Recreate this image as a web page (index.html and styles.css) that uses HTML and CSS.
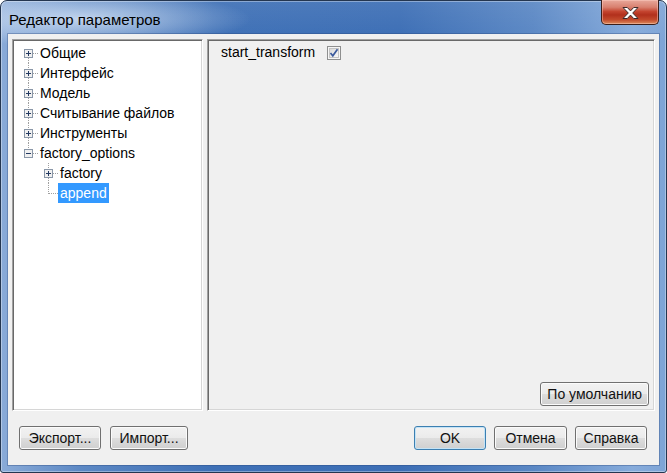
FILE: index.html
```html
<!DOCTYPE html>
<html lang="ru">
<head>
<meta charset="utf-8">
<title>Редактор параметров</title>
<link rel="stylesheet" href="styles.css">
</head>
<body>
<div class="window">
  <div class="titlebar">
    <div class="title">Редактор параметров</div>
    <div class="close">
      <svg width="17" height="14" viewBox="0 0 17 14">
        <path d="M1 1.5h4.3l3.2 3.4 3.2-3.4h4.3l-5.3 5.5 5.3 5.5h-4.3l-3.2-3.4-3.2 3.4h-4.3l5.3-5.5z" fill="#fff" stroke="#3b2a2a" stroke-width="1" stroke-linejoin="round"/>
      </svg>
    </div>
  </div>
  <div class="client">
    <div class="panes">
      <div class="tree">
        <div class="row">
          <svg class="gut" width="23" height="20" shape-rendering="crispEdges">
            <path class="dot" d="M13.5 15V20M18 10.5H23"/>
            <rect class="box" x="9.5" y="6.5" width="8" height="8"/>
            <path class="sign" d="M11 10.5H16M13.5 8V13"/>
          </svg>
          <span class="label">Общие</span>
        </div>
        <div class="row">
          <svg class="gut" width="23" height="20" shape-rendering="crispEdges">
            <path class="dot" d="M13.5 0V6M13.5 15V20M18 10.5H23"/>
            <rect class="box" x="9.5" y="6.5" width="8" height="8"/>
            <path class="sign" d="M11 10.5H16M13.5 8V13"/>
          </svg>
          <span class="label">Интерфейс</span>
        </div>
        <div class="row">
          <svg class="gut" width="23" height="20" shape-rendering="crispEdges">
            <path class="dot" d="M13.5 0V6M13.5 15V20M18 10.5H23"/>
            <rect class="box" x="9.5" y="6.5" width="8" height="8"/>
            <path class="sign" d="M11 10.5H16M13.5 8V13"/>
          </svg>
          <span class="label">Модель</span>
        </div>
        <div class="row">
          <svg class="gut" width="23" height="20" shape-rendering="crispEdges">
            <path class="dot" d="M13.5 0V6M13.5 15V20M18 10.5H23"/>
            <rect class="box" x="9.5" y="6.5" width="8" height="8"/>
            <path class="sign" d="M11 10.5H16M13.5 8V13"/>
          </svg>
          <span class="label">Считывание файлов</span>
        </div>
        <div class="row">
          <svg class="gut" width="23" height="20" shape-rendering="crispEdges">
            <path class="dot" d="M13.5 0V6M13.5 15V20M18 10.5H23"/>
            <rect class="box" x="9.5" y="6.5" width="8" height="8"/>
            <path class="sign" d="M11 10.5H16M13.5 8V13"/>
          </svg>
          <span class="label">Инструменты</span>
        </div>
        <div class="row">
          <svg class="gut" width="23" height="20" shape-rendering="crispEdges">
            <path class="dot" d="M13.5 0V6M18 10.5H23"/>
            <rect class="box" x="9.5" y="6.5" width="8" height="8"/>
            <path class="sign" d="M11 10.5H16"/>
          </svg>
          <span class="label">factory_options</span>
        </div>
        <div class="row">
          <svg class="gut" width="43" height="20" shape-rendering="crispEdges">
            <path class="dot" d="M33.5 0V6M33.5 15V20M38 10.5H43"/>
            <rect class="box" x="29.5" y="6.5" width="8" height="8"/>
            <path class="sign" d="M31 10.5H36M33.5 8V13"/>
          </svg>
          <span class="label">factory</span>
        </div>
        <div class="row">
          <svg class="gut" width="43" height="20" shape-rendering="crispEdges">
            <path class="dot" d="M33.5 0V10.5M34 10.5H43"/>
          </svg>
          <span class="label selected">append</span>
        </div>
      </div>
      <div class="props">
        <div class="prop">
          <span class="prop-name">start_transform</span>
          <svg class="check" width="14" height="14" viewBox="0 0 14 14" shape-rendering="crispEdges">
            <defs>
              <linearGradient id="cb" x1="0" y1="0" x2="1" y2="1">
                <stop offset="0" stop-color="#d8d8d8"/>
                <stop offset="1" stop-color="#fafafa"/>
              </linearGradient>
            </defs>
            <rect x="0.5" y="0.5" width="13" height="13" fill="#f6f6f6" stroke="#8e8f8f"/>
            <rect x="2.5" y="2.5" width="9" height="9" fill="url(#cb)" stroke="#c4c4c4"/>
            <path d="M3.5 7L5.8 9.8L10.5 3.2" fill="none" stroke="#3b5a9c" stroke-width="1.7" shape-rendering="geometricPrecision"/>
          </svg>
        </div>
        <div class="props-foot">
          <button class="btn">По умолчанию</button>
        </div>
      </div>
    </div>
    <div class="buttons">
      <div class="group">
        <button class="btn w82">Экспорт...</button>
        <button class="btn w78">Импорт...</button>
      </div>
      <div class="group right">
        <button class="btn default w72">OK</button>
        <button class="btn w73">Отмена</button>
        <button class="btn w72">Справка</button>
      </div>
    </div>
  </div>
</div>
</body>
</html>
```

FILE: styles.css
```css
html, body {
  margin: 0;
  padding: 0;
  background: #ffffff;
}

body {
  font-family: "Liberation Sans", Arial, sans-serif;
  width: 667px;
  height: 473px;
  overflow: hidden;
}

.window {
  box-sizing: border-box;
  width: 667px;
  height: 473px;
  border: 1px solid #243650;
  border-radius: 7px 7px 3px 3px;
  padding: 0 7px 7px 7px;
  display: flex;
  flex-direction: column;
  background:
    radial-gradient(ellipse 170px 28px at 80px 18px, rgba(225, 236, 250, 0.75), rgba(225, 236, 250, 0) 100%),
    linear-gradient(to bottom, rgba(255, 255, 255, 0.08), rgba(0, 0, 0, 0) 40px),
    linear-gradient(to right, #8aabd8 0%, #5c88c4 12%, #3e70b6 32%, #3c6eb5 60%, #5a87c4 80%, #86abdb 95%, #7ea4d6 100%);
  box-shadow: inset 0 0 0 1px rgba(255, 255, 255, 0.35);
}

.titlebar {
  height: 33px;
  display: flex;
  align-items: flex-start;
  flex: none;
}

.title {
  margin-top: 10px;
  margin-left: 1px;
  font-size: 15px;
  line-height: 18px;
  color: #000;
}

.close {
  margin-left: auto;
  margin-top: -1px;
  width: 58px;
  height: 25px;
  box-sizing: border-box;
  border: 1px solid #3a1e1a;
  border-top: none;
  border-radius: 0 0 5px 5px;
  display: flex;
  align-items: center;
  justify-content: center;
  background: linear-gradient(to bottom, #e8a89b 0%, #d8806f 30%, #c4442f 48%, #b2301c 62%, #c24a2c 82%, #dc8b5b 100%);
  box-shadow: inset 0 0 0 1px rgba(255, 210, 200, 0.45);
}

.close svg {
  display: block;
  margin-top: 1px;
}

.client {
  flex: 1;
  background: #f0f0f0;
  display: flex;
  flex-direction: column;
  box-shadow: 0 0 0 1px rgba(40, 70, 120, 0.35);
}

.panes {
  margin: 5px 4px 0 4px;
  height: 372px;
  display: flex;
  gap: 4px;
  flex: none;
}

.tree,
.props {
  box-sizing: border-box;
  border-style: solid;
  border-width: 1px;
  border-color: #a0a0a0 #ffffff #ffffff #a0a0a0;
  box-shadow: inset 1px 1px 0 #696969, inset -1px -1px 0 #d6d6d6;
}

.tree {
  width: 191px;
  background: #ffffff;
  padding: 3px 1px 1px 2px;
}

.row {
  height: 20px;
  display: flex;
  align-items: center;
}

.gut {
  display: block;
  flex: none;
}

.dot {
  fill: none;
  stroke: #a0a0a0;
  stroke-width: 1;
  stroke-dasharray: 1 1;
}

.box {
  fill: #f0f0f0;
  stroke: #8a97a8;
  stroke-width: 1;
}

.sign {
  fill: none;
  stroke: #233a62;
  stroke-width: 1;
}

.label {
  font-size: 14px;
  line-height: 20px;
  padding: 0 2px;
  color: #000;
  white-space: nowrap;
}

.label.selected {
  background: #3399ff;
  color: #ffffff;
}

.props {
  flex: 1;
  background: #f0f0f0;
  display: flex;
  flex-direction: column;
  padding: 4px 5px 4px 13px;
}

.prop {
  display: flex;
  align-items: center;
  height: 16px;
  gap: 12px;
}

.prop-name {
  font-size: 14px;
  line-height: 16px;
  color: #000;
}

.check {
  display: block;
  margin-top: 1px;
}

.props-foot {
  margin-top: auto;
  display: flex;
  justify-content: flex-end;
}

.btn {
  box-sizing: border-box;
  height: 24px;
  padding: 0 6px;
  font-family: "Liberation Sans", Arial, sans-serif;
  font-size: 14px;
  color: #111;
  border: 1px solid #707070;
  border-radius: 3px;
  background: linear-gradient(to bottom, #f2f2f2 0%, #ebebeb 48%, #dddddd 52%, #cfcfcf 100%);
  box-shadow: inset 0 0 0 1px #fbfbfb;
}

.btn.default {
  border-color: #3c7fb1;
  box-shadow: inset 0 0 0 1px #c4e3f6;
}

.w82 { width: 82px; }
.w78 { width: 78px; }
.w72 { width: 72px; }
.w73 { width: 73px; }

.buttons {
  margin-top: 15px;
  padding: 0 12px 0 11px;
  display: flex;
  justify-content: space-between;
  flex: none;
}

.group {
  display: flex;
  gap: 9px;
}

.group.right {
  gap: 8px;
}
```
